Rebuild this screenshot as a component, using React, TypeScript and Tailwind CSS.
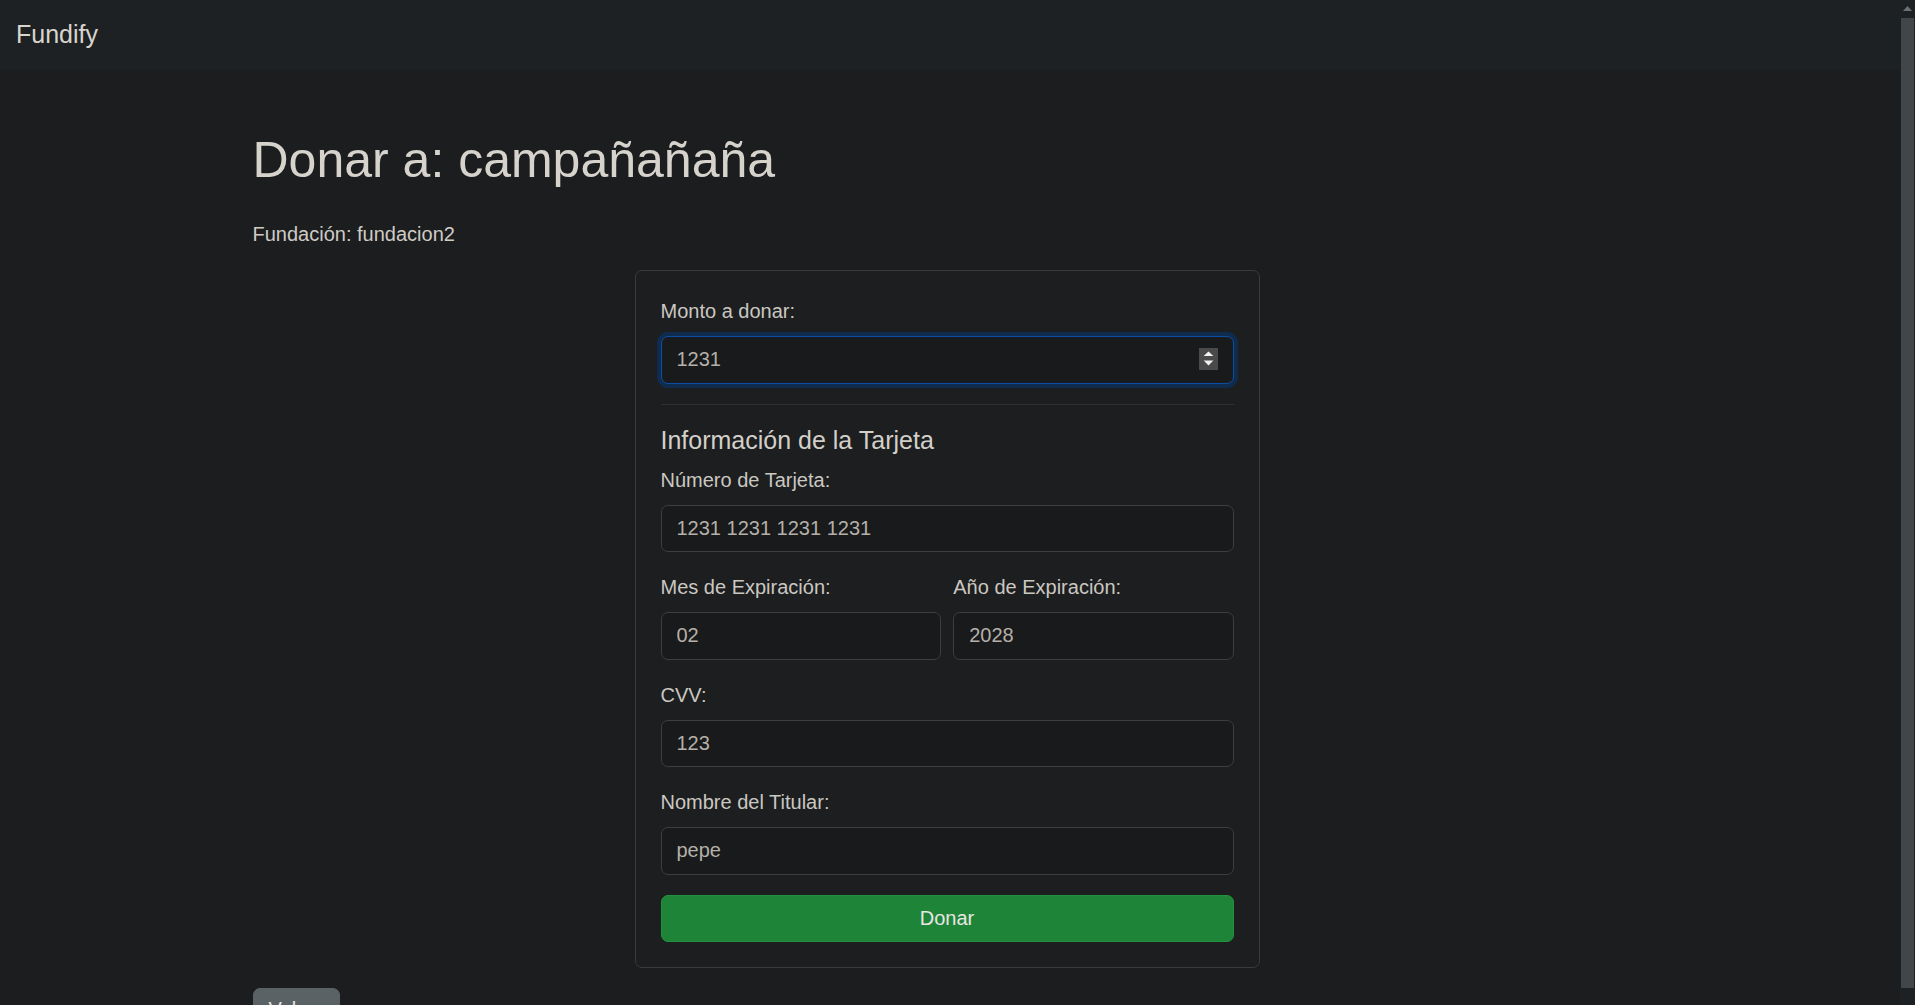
import React from "react";

function Field({
  label,
  value,
  className = "",
}: {
  label: string;
  value: string;
  className?: string;
}) {
  return (
    <div className={`mb-[20px] ${className}`}>
      <label className="mb-[10px] block text-[20px] leading-[30px] text-[#cbc7c1]">
        {label}
      </label>
      <input
        readOnly
        defaultValue={value}
        className="block h-[47.5px] w-full rounded-[7px] border border-[#3b3f42] bg-[#181a1b] px-[15px] text-[20px] text-[#b5b0a9] outline-none"
      />
    </div>
  );
}

export default function App() {
  return (
    <div className="flex h-[1005px] w-[1915px] overflow-hidden bg-[#1b1d1f] font-['Liberation_Sans',Arial,sans-serif] text-[#d3cfc9]">
      <div className="flex min-w-0 flex-1 flex-col">
        <nav className="flex h-[70px] shrink-0 items-center bg-[#1e2123] px-[16px]">
          <span className="text-[25px] leading-[37.5px] text-[#d8d4ce]">Fundify</span>
        </nav>

        <main className="mx-auto w-[1395px] pt-[60px]">
          <h1 className="mb-[29px] text-[50px] leading-[1.2] text-[#d6d2cc]">
            Donar a: campañañaña
          </h1>
          <p className="mb-[21px] text-[20px] leading-[30px] text-[#cfcbc5]">
            Fundación: fundacion2
          </p>

          <div className="ml-[382px] w-[625px] rounded-[7px] border border-[#383b3e] bg-[#1c1e20] px-[25px] pb-[25px] pt-[25px]">
            {/* monto */}
            <div className="mb-[20px]">
              <label className="mb-[10px] block text-[20px] leading-[30px] text-[#cbc7c1]">
                Monto a donar:
              </label>
              <div className="relative h-[47.5px]">
                <input
                  readOnly
                  defaultValue="1231"
                  className="block h-full w-full rounded-[7px] border border-[#0c4ea3] bg-[#181a1b] px-[15px] text-[20px] text-[#b5b0a9] shadow-[0_0_0_4px_#0f2c4f] outline-none"
                />
                <svg
                  className="absolute right-[16px] top-[12px]"
                  width="19"
                  height="22"
                  viewBox="0 0 19 22"
                >
                  <rect width="19" height="22" fill="#4a4a4a" />
                  <polygon points="4.7,8 9.5,3.5 14.3,8" fill="#f2f2f2" />
                  <polygon points="4.7,12.5 14.3,12.5 9.5,17.5" fill="#f2f2f2" />
                </svg>
              </div>
            </div>

            <hr className="mb-[20px] border-0 border-t border-[#2e3133]" />

            <h5 className="mb-[10px] text-[25px] leading-[30px] text-[#d3cfc9]">
              Información de la Tarjeta
            </h5>

            <Field label="Número de Tarjeta:" value="1231 1231 1231 1231" />

            <div className="flex gap-[12.5px]">
              <Field className="flex-1" label="Mes de Expiración:" value="02" />
              <Field className="flex-1" label="Año de Expiración:" value="2028" />
            </div>

            <Field label="CVV:" value="123" />
            <Field label="Nombre del Titular:" value="pepe" />

            <button className="block h-[47.5px] w-full rounded-[7px] border border-[#23923f] bg-[#1e8538] text-[20px] text-[#e8e6e3]">
              Donar
            </button>
          </div>

          <button className="mt-[20px] block rounded-[7px] border border-[#5b6265] bg-[#5b6265] px-[15px] pb-[15px] pt-[8px] text-[20px] leading-[24px] text-[#e8e6e3]">
            Volver
          </button>
        </main>
      </div>

      {/* scrollbar */}
      <div className="flex w-[15px] shrink-0 flex-col items-center bg-[#1e2123]">
        <svg className="mt-[6px]" width="9" height="5" viewBox="0 0 9 5">
          <polygon points="0,5 4.5,0 9,5" fill="#6c7175" />
        </svg>
        <div className="mt-[7px] h-[970px] w-[13px] bg-[#41464a]" />
      </div>
    </div>
  );
}
